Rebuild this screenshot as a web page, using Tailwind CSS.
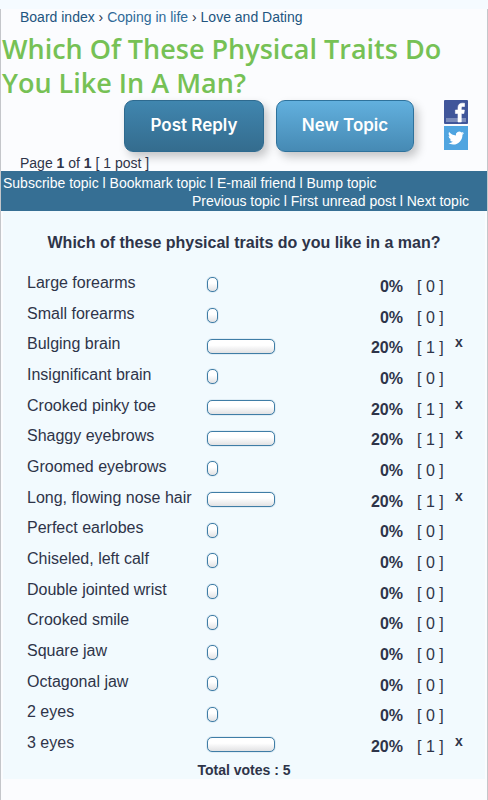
<!DOCTYPE html>
<html lang="en">

<head>
    <meta charset="UTF-8">
    <meta name="viewport" content="width=device-width,initial-scale=1.0">
    <script src="https://cdn.jsdelivr.net/npm/@tailwindcss/browser@4"></script>
    <title>Which Of These Physical Traits Do You Like In A Man?</title>
</head>

<body class="min-h-screen flex flex-col bg-[#f5fbff] pt-[9px] font-['Liberation_Sans',Arial,sans-serif] text-[#2e3449]">
    <div class="grow bg-[#fbfcfe] border-x border-[#c4c6ca]">

        <!-- Breadcrumbs -->
        <nav class="px-[19px] text-sm leading-4 text-[#22557f]">
            <a href="#">Board index</a> <span class="text-[#2e3449]">›</span>
            <a href="#" class="text-[#2f6a98]">Coping in life</a> <span class="text-[#2e3449]">›</span>
            <a href="#">Love and Dating</a>
        </nav>

        <h1 class="mt-[7px] px-px font-['Open_Sans',sans-serif] text-[27px] leading-[34px] font-semibold text-[#76c155]">
            Which Of These Physical Traits Do You Like In A Man?
        </h1>

        <!-- Buttons and share links -->
        <div class="flex justify-end gap-3 pr-[19px] font-['Inter',sans-serif] text-[17px] font-semibold text-white">
            <button type="button"
                class="w-[140px] h-[52px] rounded-[9px] border border-[#2e6a8f] bg-linear-to-b from-[#4086af] to-[#346c8e] shadow-[4px_5px_10px_rgba(0,0,0,0.22)]">Post Reply</button>
            <button type="button"
                class="w-[138px] h-[52px] rounded-[9px] border border-[#2e729c] bg-linear-to-b from-[#62b0de] to-[#468ab4] shadow-[4px_5px_10px_rgba(0,0,0,0.22)]">New Topic</button>
            <div class="flex flex-col gap-[2px] ml-[18px]">
                <a href="#" aria-label="Facebook">
                    <svg class="block size-6" viewBox="0 0 24 24">
                        <rect width="24" height="24" rx="1" fill="#40569a" />
                        <rect x="2" y="18" width="20" height="4" fill="#7b8cbb" />
                        <path d="M14 22v-8.500h-2.600V10H14V7.600C14 4.700 15.700 3.200 18.300 3.200c1 0 1.900.1 2.200.1v3.200h-1.600c-1.200 0-1.600.7-1.600 1.600V10h3.100l-.5 3.500h-2.600V22z" fill="#fff" stroke="#fff" stroke-width=".6" />
                    </svg>
                </a>
                <a href="#" aria-label="Twitter">
                    <svg class="block size-6" viewBox="0 0 24 24">
                        <rect width="24" height="24" fill="#50a5e0" />
                        <path transform="translate(4 4) scale(.67)" d="M23.950 4.570a10 10 0 0 1-2.820.770 4.960 4.960 0 0 0 2.160-2.720c-.950.550-2 .950-3.130 1.180a4.920 4.920 0 0 0-8.380 4.480C7.690 8.090 4.070 6.130 1.640 3.160a4.820 4.820 0 0 0-.670 2.480c0 1.710.870 3.210 2.190 4.100a4.900 4.900 0 0 1-2.230-.620v.060a4.920 4.920 0 0 0 3.950 4.830 5 5 0 0 1-2.210.080 4.940 4.940 0 0 0 4.600 3.420A9.870 9.870 0 0 1 0 19.540a13.940 13.940 0 0 0 7.550 2.210c9.050 0 14-7.500 14-13.980 0-.210 0-.420-.020-.630a9.940 9.940 0 0 0 2.460-2.550z" fill="#fff" />
                    </svg>
                </a>
            </div>
        </div>

        <p class="mt-[3px] px-[19px] text-sm leading-4">Page <b>1</b> of <b>1</b> [ 1 post ]</p>

        <!-- Topic links -->
        <div class="px-[2px] pt-[3px] pb-px bg-[#366f94] text-sm leading-[18px] text-white">
            <div>
                <a href="#">Subscribe topic</a> l <a href="#">Bookmark topic</a> l <a href="#">E-mail friend</a> l <a href="#">Bump topic</a>
            </div>
            <div class="pr-4 text-right">
                <a href="#">Previous topic</a> l <a href="#">First unread post</a> l <a href="#">Next topic</a>
            </div>
        </div>

        <!-- Poll -->
        <div class="mx-[2px] pt-[22px] bg-[#f2fafe]">
            <h2 class="text-base leading-5 font-bold text-center">Which of these physical traits do you like in a man?</h2>
            <table class="mt-4 w-full table-fixed text-base leading-5">
                <colgroup>
                    <col class="w-[204px]">
                    <col>
                    <col class="w-[60px]">
                    <col class="w-[52px]">
                    <col class="w-[30px]">
                </colgroup>
                <tbody id="poll"></tbody>
            </table>
            <p class="pt-px text-sm leading-[18px] font-bold text-center">Total votes : 5</p>
        </div>
    </div>

    <script>
        const options = [
            ["Large forearms", 0],
            ["Small forearms", 0],
            ["Bulging brain", 1],
            ["Insignificant brain", 0],
            ["Crooked pinky toe", 1],
            ["Shaggy eyebrows", 1],
            ["Groomed eyebrows", 0],
            ["Long, flowing nose hair", 1],
            ["Perfect earlobes", 0],
            ["Chiseled, left calf", 0],
            ["Double jointed wrist", 0],
            ["Crooked smile", 0],
            ["Square jaw", 0],
            ["Octagonal jaw", 0],
            ["2 eyes", 0],
            ["3 eyes", 1],
        ];
        const total = 5;

        document.getElementById("poll").innerHTML = options.map(([name, votes]) => {
            const percent = votes / total * 100;
            // an empty bar still shows its rounded ends
            const width = Math.round(11 + percent * 2.85);
            return `<tr class="h-[31px] nth-[3n]:h-[30px]">
                <th scope="row" class="p-0 pl-6 pb-1 text-left font-normal whitespace-nowrap">${name}</th>
                <td class="p-0"><div class="h-[15px] rounded-[5px] border border-[#3f7da6] bg-linear-to-b from-white from-40% to-[#e2e2e4] shadow-[0_0_1px_#3f7da6]" style="width: ${width}px"></div></td>
                <td class="p-0 pt-1 text-right font-bold">${percent}%</td>
                <td class="p-0 pt-1 pl-[14px] whitespace-nowrap">[ ${votes} ]</td>
                <td class="p-0 pb-2 text-sm leading-5 font-bold">${votes ? "x" : ""}</td>
            </tr>`;
        }).join("");
    </script>
</body>

</html>
